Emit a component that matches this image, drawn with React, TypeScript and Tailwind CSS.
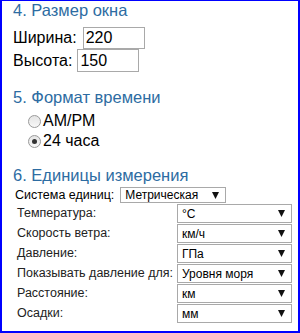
import React from 'react';

const Arrow = () => (
  <svg width="7" height="7" viewBox="0 0 7 7" className="shrink-0">
    <path d="M0 0 H7 L3.5 7 Z" fill="#111" />
  </svg>
);

const Select = ({ value, className }: { value: string; className: string }) => (
  <div className={`flex items-center justify-between border border-[#a9a9a9] bg-white pl-[4px] pr-[6px] text-[12px] leading-none text-black ${className}`}>
    <span>{value}</span>
    <Arrow />
  </div>
);

const Radio = ({ checked }: { checked?: boolean }) => (
  <span className="flex h-[13px] w-[13px] items-center justify-center rounded-full border border-[#9a9a9a] bg-gradient-to-b from-[#e4e4e4] to-[#f8f8f8]">
    {checked && <span className="h-[5px] w-[5px] rounded-full bg-[#333]" />}
  </span>
);

const units = [
  ['Температура:', '°C'],
  ['Скорость ветра:', 'км/ч'],
  ['Давление:', 'ГПа'],
  ['Показывать давление для:', 'Уровня моря'],
  ['Расстояние:', 'км'],
  ['Осадки:', 'мм'],
];

export default function App() {
  return (
    <div className="h-[333px] w-[300px] overflow-hidden border-x-2 border-b-2 border-t border-[#0000ff] bg-white pl-[11px] font-['Liberation_Sans',Arial,sans-serif] text-black">
      {/* 4. window size */}
      <h3 className="text-[16.5px] leading-[18px] text-[#2d6ca2]">4. Размер окна</h3>
      <div className="mt-[8px] flex h-[22px] items-center gap-[6px] text-[16px]">
        <span>Ширина:</span>
        <div className="flex h-[22px] w-[62px] items-center border border-[#a9a9a9] px-[2px]">220</div>
      </div>
      <div className="flex h-[23px] items-center gap-[5px] text-[16px]">
        <span>Высота:</span>
        <div className="flex h-[23px] w-[62px] items-center border border-[#a9a9a9] px-[2px]">150</div>
      </div>

      {/* 5. time format */}
      <h3 className="mt-[16px] text-[16.5px] leading-[18px] text-[#2d6ca2]">5. Формат времени</h3>
      <div className="mt-[5px] ml-[15px] flex flex-col text-[16px] leading-[20px]">
        <label className="flex h-[20px] items-center gap-[2px]">
          <Radio />
          <span>AM/PM</span>
        </label>
        <label className="flex h-[20px] items-center gap-[2px]">
          <Radio checked />
          <span>24 часа</span>
        </label>
      </div>

      {/* 6. units */}
      <h3 className="mt-[15px] text-[16.5px] leading-[18px] text-[#2d6ca2]">6. Единицы измерения</h3>
      <div className="mt-[3px] flex h-[16px] items-center gap-[6px] text-[12.5px]">
        <span className="ml-[2px]">Система единиц:</span>
        <Select value="Метрическая" className="h-[16px] w-[106px]" />
      </div>
      <div className="mt-[1px] ml-[4px] grid grid-cols-[160px_115px] gap-y-[1px] text-[12.5px] text-[#222]">
        {units.map(([label, value]) => (
          <React.Fragment key={label}>
            <div className="flex h-[19px] items-center whitespace-nowrap">{label}</div>
            <Select value={value} className="h-[19px]" />
          </React.Fragment>
        ))}
      </div>
    </div>
  );
}
